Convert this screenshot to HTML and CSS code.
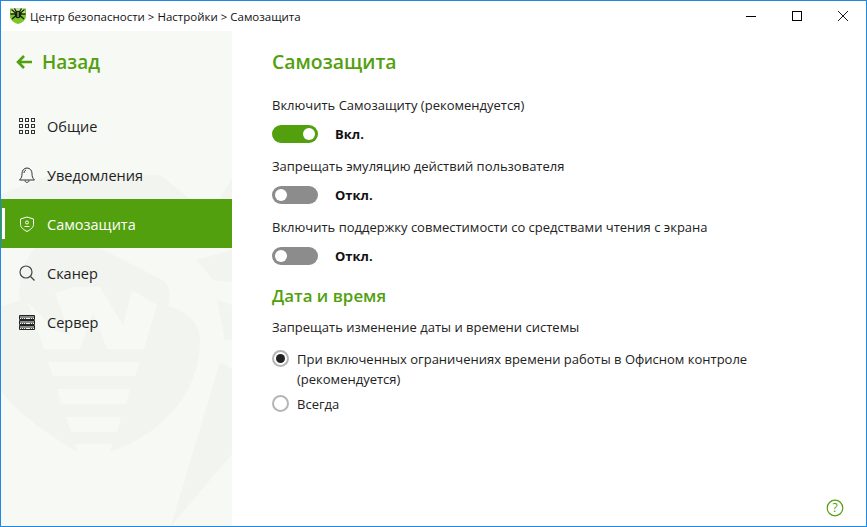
FILE: index.html
```html
<!DOCTYPE html>
<html lang="ru">
<head>
  <meta charset="UTF-8" />
  <title>Центр безопасности</title>
  <link rel="stylesheet" href="styles.css">
</head>
<body>
  <div class="window">
    <!-- Title bar -->
    <div class="titlebar">
      <svg class="logo" width="18" height="18" viewBox="0 0 18 18">
        <path d="M1 1.500H17V9C17 13 13 16 9 17C5 16 1 13 1 9Z" fill="#7cc62a"/>
        <path d="M2 2H16V7C13 9 5 9 2 7Z" fill="#c4e88c"/>
        <ellipse cx="9" cy="7.500" rx="3.200" ry="3.800" fill="#16200e"/>
        <path d="M2.500 2.500L6.500 6M15.500 2.500L11.500 6M1.500 7H6M16.500 7H12M3 12L6.500 9M15 12L11.500 9M5.500 1.500L7.500 5M12.500 1.500L10.500 5" stroke="#16200e" stroke-width="1.300"/>
        <path d="M9 5V10" stroke="#b8e070"/>
      </svg>
      <span class="crumbs">Центр безопасности &gt; Настройки &gt; Самозащита</span>
      <div class="win-buttons">
        <svg width="12" height="12" viewBox="0 0 12 12"><path d="M1 6.500H11" stroke="#000"/></svg>
        <svg width="12" height="12" viewBox="0 0 12 12"><rect x="1.500" y="1.500" width="9" height="9" fill="none" stroke="#000"/></svg>
        <svg width="12" height="12" viewBox="0 0 12 12"><path d="M1 1L11 11M11 1L1 11" stroke="#000" stroke-width="0.9"/></svg>
      </div>
    </div>

    <div class="main">
      <!-- Sidebar -->
      <div class="sidebar">
        <svg class="watermark" width="231" height="495" viewBox="1 31 231 495">
          <g fill="#f2f4f0">
            <path d="M0 195L50 175H160L190 199H0Z"/>
            <path d="M220 199L232 178V199Z"/>
            <path d="M197 260L232 250V282L213 280Z"/>
            <path d="M217 300L232 305V340L225 340Z"/>
            <path d="M220 362L232 369V454L171 526Z"/>
            <path d="M100 248L166 282C171 292 170 300 168 306C190 312 200 325 200 340C200 395 160 435 110 452H77C40 430 15 410 0 390V307L20 300C18 280 22 262 35 248Z"/>
          </g>
          <g fill="#f7f9f5">
            <path d="M28 303L44 349H80L93 313L107 349H144L157 305L132 290L123 325L100 287H75L55 293L70 335L55 330Z"/>
            <path d="M48 362H140L135 376H53Z"/>
            <path d="M57 389H130L126 404H61Z"/>
            <path d="M66 417H121L117 432H71Z"/>
            <path d="M75 444H112L110 452H77Z"/>
          </g>
        </svg>
        <div class="back">
          <svg width="17" height="16" viewBox="0 0 17 16"><path d="M8 2L2 8L8 14M2 8H16" fill="none" stroke="#52a00e" stroke-width="2.600"/></svg>
          <span>Назад</span>
        </div>
        <nav class="menu">
          <div class="menu-item">
            <svg class="icon" width="16" height="16" viewBox="0 0 16 16" fill="none" stroke="#333">
              <rect x="0.500" y="0.500" width="3" height="3"/><rect x="6.500" y="0.500" width="3" height="3"/><rect x="12.500" y="0.500" width="3" height="3"/>
              <rect x="0.500" y="6.500" width="3" height="3"/><rect x="6.500" y="6.500" width="3" height="3"/><rect x="12.500" y="6.500" width="3" height="3"/>
              <rect x="0.500" y="12.500" width="3" height="3"/><rect x="6.500" y="12.500" width="3" height="3"/><rect x="12.500" y="12.500" width="3" height="3"/>
            </svg>
            Общие
          </div>
          <div class="menu-item">
            <svg class="icon" width="16" height="16" viewBox="0 0 16 16" fill="none" stroke="#333">
              <path d="M0.500 13H15.500C13.500 11 13 9.500 13 6.500C13 3.500 11 1 8 1C5 1 3 3.500 3 6.500C3 9.500 2.500 11 0.500 13Z"/>
              <path d="M6 13.500C6 16 10 16 10 13.500M5 6C5 4.500 5.800 3.500 7 3"/>
            </svg>
            Уведомления
          </div>
          <div class="menu-item active">
            <svg class="icon" width="16" height="16" viewBox="0 0 16 16" fill="none" stroke="#fff">
              <path d="M8 1L14.500 3V8.500C14.500 11.500 11 14 8 15.500C5 14 1.500 11.500 1.500 8.500V3Z"/>
              <circle cx="8" cy="6.500" r="1.500"/>
              <path d="M5.500 10.500H10.500"/>
            </svg>
            Самозащита
          </div>
          <div class="menu-item">
            <svg class="icon" width="16" height="16" viewBox="0 0 16 16" fill="none" stroke="#444" stroke-width="1.200">
              <circle cx="7" cy="7" r="6"/>
              <path d="M11.500 11.500L15.500 15.500"/>
            </svg>
            Сканер
          </div>
          <div class="menu-item">
            <svg class="icon" width="16" height="16" viewBox="0 0 16 16">
              <path d="M0.500 1.500H15.500V5.500H0.500ZM0.500 6.500H15.500V10.500H0.500ZM0.500 11.500H15.500V15.500H0.500Z" fill="none" stroke="#222"/>
              <path d="M0 3H16M0 8H16M0 13H16" stroke="#222"/>
              <path d="M2 4.500H8M11 4.500H14M2 9.500H8M11 9.500H14M2 14.500H8M11 14.500H14" stroke="#555" stroke-dasharray="1 1"/>
            </svg>
            Сервер
          </div>
        </nav>
      </div>

      <!-- Settings -->
      <div class="content">
        <h1>Самозащита</h1>

        <div class="option-label">Включить Самозащиту (рекомендуется)</div>
        <div class="toggle-row">
          <span class="toggle on"><i></i></span>
          <b>Вкл.</b>
        </div>

        <div class="option-label">Запрещать эмуляцию действий пользователя</div>
        <div class="toggle-row">
          <span class="toggle"><i></i></span>
          <b>Откл.</b>
        </div>

        <div class="option-label">Включить поддержку совместимости со средствами чтения с экрана</div>
        <div class="toggle-row">
          <span class="toggle"><i></i></span>
          <b>Откл.</b>
        </div>

        <h2>Дата и время</h2>
        <div class="option-label date-label">Запрещать изменение даты и времени системы</div>

        <div class="radio-row">
          <span class="radio checked"></span>
          <span>При включенных ограничениях времени работы в Офисном контроле<br>(рекомендуется)</span>
        </div>
        <div class="radio-row">
          <span class="radio"></span>
          <span>Всегда</span>
        </div>

        <svg class="help" width="18" height="18" viewBox="0 0 18 18">
          <circle cx="9" cy="9" r="7.800" fill="none" stroke="#52a00e" stroke-width="1.200"/>
          <text x="9" y="13" text-anchor="middle" class="help-mark">?</text>
        </svg>
      </div>
    </div>
  </div>
</body>
</html>
```

FILE: styles.css
```css
* { box-sizing: border-box; margin: 0; padding: 0; }
html, body { height: 100%; }
body { background: #fff; color: #222; font-family: "Open Sans", sans-serif; font-size: 13px; overflow: hidden; }

.window {
  height: 527px;
  border: 1px solid #1e88e5;
  display: flex;
  flex-direction: column;
}

.titlebar {
  height: 30px;
  flex: none;
  display: flex;
  align-items: center;
  padding-left: 8px;
  font-size: 11.5px;
  color: #111;
}

.logo { margin-right: 3px; }

.win-buttons {
  margin-left: auto;
  display: flex;
  gap: 34px;
  padding-right: 17px;
}

.main { flex: 1; display: flex; min-height: 0; }

.sidebar {
  width: 231px;
  flex: none;
  background: #f7f9f5;
  position: relative;
}

.watermark { position: absolute; left: 0; top: 0; }

.back {
  position: relative;
  display: flex;
  align-items: center;
  gap: 9px;
  height: 61px;
  padding-left: 15px;
  color: #52a00e;
  font-size: 19px;
  font-weight: 600;
}

.menu { position: relative; margin-top: 9px; }

.menu-item {
  height: 49px;
  display: flex;
  align-items: center;
  gap: 12px;
  padding: 1px 0 0 18px;
  font-size: 14.5px;
  color: #222;
}

.menu-item.active {
  background: #52a00e;
  color: #fff;
  position: relative;
}

.menu-item.active::before {
  content: "";
  position: absolute;
  left: 1px;
  top: 9px;
  width: 3px;
  height: 31px;
  background: #fff;
}

.icon { flex: none; }

.content { flex: 1; position: relative; padding: 18px 0 0 40px; }

h1, h2 { color: #52a00e; font-weight: 600; }
h1 { font-size: 19.4px; line-height: 25px; margin-bottom: 22px; }
h2 { font-size: 16.9px; line-height: 22px; margin: 20px 0 11px; }

.option-label { line-height: 18px; }

.toggle-row {
  display: flex;
  align-items: center;
  gap: 17px;
  height: 18px;
  margin: 11px 0 14px;
  color: #111;
}

.toggle {
  width: 46px;
  height: 18px;
  border-radius: 9px;
  background: #8c8c8c;
  display: flex;
  align-items: center;
  padding: 0 3px;
}

.toggle i { width: 12px; height: 12px; border-radius: 50%; background: #fff; }
.toggle.on { background: #52a00e; justify-content: flex-end; }

.date-label { margin-bottom: 13px; }

.radio-row { display: flex; gap: 8px; line-height: 20px; margin-bottom: 5px; }

.radio {
  width: 17px;
  height: 17px;
  margin-top: 1px;
  border-radius: 50%;
  border: 2px solid #b5b5b5;
  background: #fff;
  flex: none;
  display: flex;
  align-items: center;
  justify-content: center;
}

.radio.checked::after {
  content: "";
  width: 9px;
  height: 9px;
  border-radius: 50%;
  background: #222;
}

.help { position: absolute; right: 22px; bottom: 9px; }
.help-mark { fill: #52a00e; font-size: 12px; font-family: "Open Sans", sans-serif; }
```
